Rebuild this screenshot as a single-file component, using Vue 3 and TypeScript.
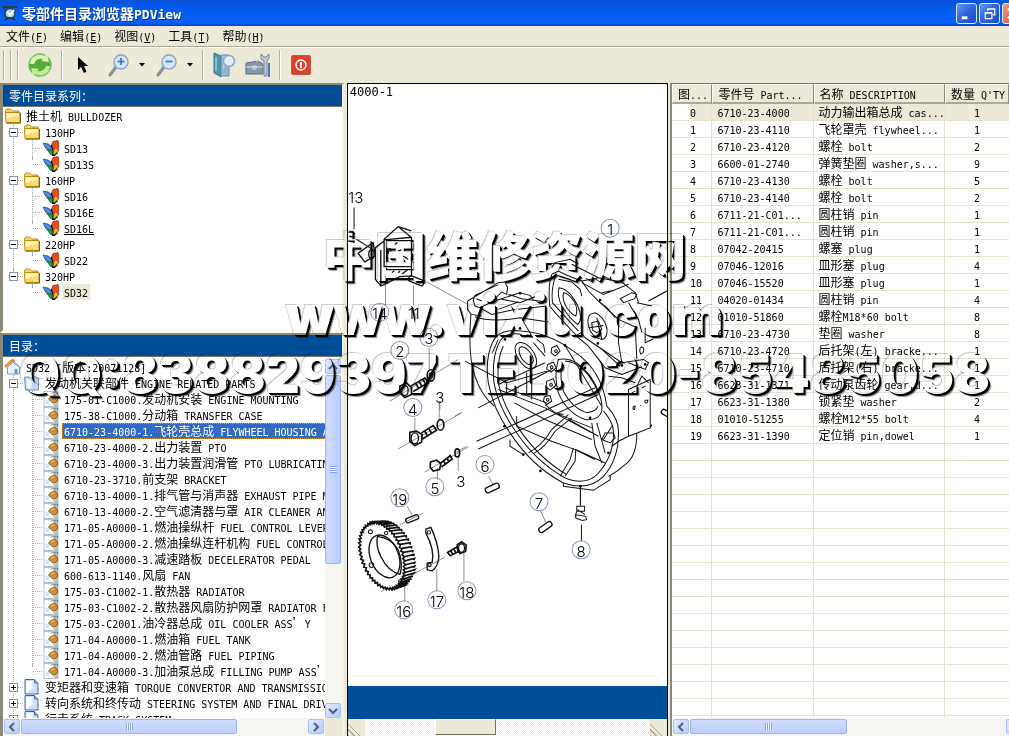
<script setup lang="ts">
import { h } from 'vue'

// Splits a label into CJK and Latin runs so each gets its own grid size.
const Mixed = (props: { t: string }) =>
  (props.t.match(/[\x00-\x7f]+|[^\x00-\x7f]+/g) ?? []).map((run) =>
    h('span', { class: run.charCodeAt(0) < 128 ? 'run-la' : 'run-cjk' }, run),
  )
Mixed.props = ['t']

const menus = [
  { name: '文件', key: 'F' },
  { name: '编辑', key: 'E' },
  { name: '视图', key: 'V' },
  { name: '工具', key: 'T' },
  { name: '帮助', key: 'H' },
]

interface Node {
  level: number
  text: string
  icon: string
  toggle?: string
  last?: boolean
  end?: boolean
  state?: string
}

const series: Node[] = [
  { level: 0, text: '推土机 BULLDOZER', icon: 'folder' },
  { level: 1, text: '130HP', icon: 'folder', toggle: '-' },
  { level: 2, text: 'SD13', icon: 'wing' },
  { level: 2, text: 'SD13S', icon: 'wing', last: true },
  { level: 1, text: '160HP', icon: 'folder', toggle: '-' },
  { level: 2, text: 'SD16', icon: 'wing' },
  { level: 2, text: 'SD16E', icon: 'wing' },
  { level: 2, text: 'SD16L', icon: 'wing', last: true, state: 'hot' },
  { level: 1, text: '220HP', icon: 'folder', toggle: '-' },
  { level: 2, text: 'SD22', icon: 'wing', last: true },
  { level: 1, text: '320HP', icon: 'folder', toggle: '-', last: true },
  { level: 2, text: 'SD32', icon: 'wing', last: true, end: true, state: 'dim' },
]

const parts = [
  '175-01-C1000.发动机安装 ENGINE MOUNTING',
  '175-38-C1000.分动箱 TRANSFER CASE',
  '6710-23-4000-1.飞轮壳总成 FLYWHEEL HOUSING ASSEMBLY',
  '6710-23-4000-2.出力装置 PTO',
  '6710-23-4000-3.出力装置润滑管 PTO LUBRICATING',
  '6710-23-3710.前支架 BRACKET',
  '6710-13-4000-1.排气管与消声器 EXHAUST PIPE MUFFLER',
  '6710-13-4000-2.空气滤清器与罩 AIR CLEANER AND',
  '171-05-A0000-1.燃油操纵杆 FUEL CONTROL LEVER',
  '171-05-A0000-2.燃油操纵连杆机构 FUEL CONTROL',
  '171-05-A0000-3.减速踏板 DECELERATOR PEDAL',
  '600-613-1140.风扇 FAN',
  '175-03-C1002-1.散热器 RADIATOR',
  '175-03-C1002-2.散热器风扇防护网罩 RADIATOR FAN',
  '175-03-C2001.油冷器总成 OIL COOLER ASS’Y',
  '171-04-A0000-1.燃油箱 FUEL TANK',
  '171-04-A0000-2.燃油管路 FUEL PIPING',
  '171-04-A0000-3.加油泵总成 FILLING PUMP ASS’Y',
]

const catalog: Node[] = [
  { level: 0, text: 'SD32 [版本:20071128]', icon: 'house' },
  { level: 1, text: '发动机关联部件 ENGINE RELATED PARTS', icon: 'book', toggle: '-' },
  ...parts.map((text, i) => ({
    level: 2,
    text,
    icon: 'part',
    last: i === parts.length - 1,
    state: i === 2 ? 'picked' : undefined,
  })),
  { level: 1, text: '变矩器和变速箱 TORQUE CONVERTOR AND TRANSMISSION', icon: 'page', toggle: '+' },
  { level: 1, text: '转向系统和终传动 STEERING SYSTEM AND FINAL DRIVE', icon: 'page', toggle: '+' },
  { level: 1, text: '行走系统 TRACK SYSTEM', icon: 'page', toggle: '+' },
]

const rows: string[][] = [
  ['0', '6710-23-4000', '动力输出箱总成 cas...', '1'],
  ['1', '6710-23-4110', '飞轮罩壳 flywheel...', '1'],
  ['2', '6710-23-4120', '螺栓 bolt', '2'],
  ['3', '6600-01-2740', '弹簧垫圈 washer,s...', '9'],
  ['4', '6710-23-4130', '螺栓 bolt', '5'],
  ['5', '6710-23-4140', '螺栓 bolt', '2'],
  ['6', '6711-21-C01...', '圆柱销 pin', '1'],
  ['7', '6711-21-C01...', '圆柱销 pin', '1'],
  ['8', '07042-20415', '螺塞 plug', '1'],
  ['9', '07046-12016', '皿形塞 plug', '4'],
  ['10', '07046-15520', '皿形塞 plug', '1'],
  ['11', '04020-01434', '圆柱销 pin', '4'],
  ['12', '01010-51860', '螺栓M18*60 bolt', '8'],
  ['13', '6710-23-4730', '垫圈 washer', '8'],
  ['14', '6710-23-4720', '后托架(左) bracke...', '1'],
  ['15', '6710-23-4710', '后托架(右) bracke...', '1'],
  ['16', '6623-31-1371', '传动泵齿轮 gear,d...', '1'],
  ['17', '6623-31-1380', '锁紧垫 washer', '2'],
  ['18', '01010-51255', '螺栓M12*55 bolt', '4'],
  ['19', '6623-31-1390', '定位销 pin,dowel', '1'],
]
const blankRows = 18

const callouts = [
  { n: '1', x: 610, y: 229 },
  { n: '14', x: 380, y: 313 },
  { n: '3', x: 429, y: 338 },
  { n: '2', x: 400, y: 351 },
  { n: '4', x: 413, y: 408 },
  { n: '6', x: 485, y: 465 },
  { n: '5', x: 435, y: 487 },
  { n: '7', x: 539, y: 502 },
  { n: '19', x: 400, y: 498 },
  { n: '8', x: 581, y: 550 },
  { n: '16', x: 404, y: 610 },
  { n: '17', x: 437, y: 600 },
  { n: '18', x: 467, y: 591 },
]
const plain = [
  { n: '13', x: 356, y: 198 },
  { n: '11', x: 414, y: 314 },
  { n: '3', x: 440, y: 397 },
  { n: '3', x: 461, y: 481 },
]

// Ring gear: teeth run from the front rim ellipse to the rear one.
const tilt = (-20 * Math.PI) / 180
function rim(a: number, cx: number, cy: number, rx: number, ry: number): [number, number] {
  const x = rx * Math.cos(a)
  const y = ry * Math.sin(a)
  return [cx + x * Math.cos(tilt) - y * Math.sin(tilt), cy + x * Math.sin(tilt) + y * Math.cos(tilt)]
}
let gearFace = ''
let gearTeeth = ''
const toothCount = 52
for (let i = 0; i < toothCount * 2; i++) {
  const a = (i * Math.PI) / toothCount
  const k = i % 2 ? 0 : 6
  const p = rim(a, 112, 468, 58 + k, 100 + k)
  gearFace += (i ? 'L' : 'M') + p.map(Math.round).join(' ')
  const deg = (a * 180) / Math.PI
  if (i % 2 === 0 && (deg < 100 || deg > 262)) {
    const q = rim(a, 142, 462, 62, 102)
    const r = rim(a + 0.05, 142, 462, 60, 100)
    gearTeeth += `M${p.map(Math.round).join(' ')}L${q.map(Math.round).join(' ')}L${r.map(Math.round).join(' ')}`
  }
}
gearFace += 'Z'
</script>

<template>
  <div class="app">
    <svg class="defs" aria-hidden="true">
      <symbol id="folder" viewBox="0 0 17 16">
        <path d="M1 4.500V2.500L2.500 1H6L8 3H14.500V5" fill="#f3d265" stroke="#b78f1d" />
        <path d="M.8 4.500H15.500V14.500H1.500Z" fill="#f7dc72" stroke="#b88c17" />
        <path d="M2 5.500H14.500V8Q8 8 2 11Z" fill="#fff4b8" />
        <path d="M2 15.200H16V5" fill="none" stroke="#806015" />
      </symbol>
      <symbol id="wing" viewBox="0 0 17 16">
        <path d="M9 5L10.500 1.500 15.500 .5 16.500 4 16 11 12 12.500Z" fill="#e0501f" stroke="#8a2410" stroke-width=".7" />
        <path d="M.5 3L6 4 9 7 10 11 7 11 3 8Z" fill="#4a8bdc" stroke="#173e86" stroke-width=".7" />
        <path d="M4 9L8.500 10 11 15 8 14.500Z" fill="#219a4f" stroke="#0d5b2b" stroke-width=".6" />
        <path d="M10.500 10L15 8.500 14.500 13 11.500 14.500Z" fill="#f7b31a" />
        <path d="M8.500 5L10.500 10.500 10.500 15M15 12.500L12 15.300H9.500" stroke="#111" stroke-width="1.200" fill="none" />
      </symbol>
      <symbol id="page" viewBox="0 0 17 16">
        <path d="M1.500 .5H11L14.500 4V15H1.500Z" fill="#cfe2fc" stroke="#4569a5" />
        <path d="M3 2H9V9L3 14Z" fill="#fff" />
        <path d="M11 .5V4H14.500" fill="#9fbce6" stroke="#4569a5" />
      </symbol>
      <symbol id="book" viewBox="0 0 17 16">
        <path d="M1 2H6L9 4 11 1.500 15 3V15H2Z" fill="#c3d7f6" stroke="#6f91c4" />
        <path d="M3 3.500L8 6 8 14 3 13Z" fill="#f2f7ff" />
      </symbol>
      <symbol id="part" viewBox="0 0 17 16">
        <path d="M1 0H16V16H1Z" fill="#b6bfce" />
        <path d="M2 1H11V15H2Z" fill="#fff" />
        <path d="M3 9H7V13H3Z" fill="#cfe6fb" />
        <path d="M9 2L15 1V4" stroke="#7a8496" fill="none" />
        <path d="M6 8L9 5H11L12 3.500 13 5 15 6V10L12 12 9 11Z" fill="#c9932a" stroke="#765013" stroke-width=".8" />
        <path d="M9 7L12 6" stroke="#ffe49a" />
      </symbol>
      <symbol id="house" viewBox="0 0 17 16">
        <path d="M3 8L9 3 15 8V15H3Z" fill="#e9f1fb" stroke="#7b9cc9" />
        <path d="M.5 8L8 1 10 3" fill="none" stroke="#f08a22" stroke-width="2.500" />
        <path d="M9 3L16 9" stroke="#8aa9d2" stroke-width="1.500" />
        <path d="M10 10H13V15H10Z" fill="#6f95c9" />
      </symbol>
    </svg>

    <header class="titlebar">
      <svg class="app-icon" viewBox="0 0 16 16" aria-hidden="true">
        <path d="M0 1H15V3H4L2 5Z" fill="#273d47" />
        <circle cx="8" cy="8.500" r="5" fill="#a7d8de" stroke="#26444d" stroke-width="1.500" />
        <path d="M5 6.500L8 10 12 5" stroke="#f4fdff" stroke-width="1.800" fill="none" />
        <path d="M3 15L6 13H10L13 15" stroke="#1b2f38" stroke-width="1.500" fill="none" />
      </svg>
      <h1><Mixed t="零部件目录浏览器PDView" /></h1>
      <div class="win-buttons">
        <button type="button" aria-label="Minimize">
          <svg viewBox="0 0 20 20"><path d="M5 13H11V16H5Z" fill="#fff" /></svg>
        </button>
        <button type="button" aria-label="Restore">
          <svg viewBox="0 0 20 20" fill="none" stroke="#fff">
            <path d="M5.500 9.500H12.500V15.500H5.500ZM5 9H13" stroke-width="1.300" />
            <path d="M8 7V5.500H15.500V11.500H13.500M8 5H16" stroke-width="1.300" />
          </svg>
        </button>
        <button type="button" class="close" aria-label="Close">
          <svg viewBox="0 0 20 20"><path d="M5 5L15 15M15 5L5 15" stroke="#fff" stroke-width="2" /></svg>
        </button>
      </div>
    </header>

    <nav class="menubar">
      <button v-for="m in menus" :key="m.key" type="button">
        <Mixed :t="m.name" /><span class="key">(<u>{{ m.key }}</u>)</span>
      </button>
    </nav>

    <div class="toolbar">
      <i class="grip"></i><i class="grip"></i><i class="grip"></i>
      <button type="button" class="tool wide" aria-label="Refresh">
        <svg viewBox="0 0 26 26" width="26" height="26">
          <circle cx="13" cy="13" r="11.500" fill="#52ad3a" stroke="#a9cf9b" />
          <path d="M3 12A10 9 0 0 1 18 4L20 2 22 10 14 9 16 7Q9 6 7 12Z" fill="#d8f3ae" />
          <path d="M23 14A10 9 0 0 1 8 22L6 24 4 16 12 17 10 19Q17 20 19 14Z" fill="#c2ec98" />
        </svg>
      </button>
      <i class="sep"></i>
      <button type="button" class="tool wide" aria-label="Select">
        <svg viewBox="0 0 12 18" width="12" height="18">
          <path d="M1 1V14L4 11 7 17 9.500 15.500 7 10H11Z" fill="#000" />
        </svg>
      </button>
      <button v-for="z in ['+', '-']" :key="z" type="button" class="tool zoomer" :aria-label="z === '+' ? 'Zoom in' : 'Zoom out'">
        <svg viewBox="0 0 22 24" width="22" height="24">
          <path d="M8 14L2 22" stroke="#8c8f98" stroke-width="3" stroke-linecap="round" />
          <circle cx="13" cy="9" r="7" fill="#d9e9fb" stroke="#8fa5c4" stroke-width="1.500" />
          <path d="M9.500 8.500H16.500" stroke="#3f77c7" stroke-width="1.800" />
          <path v-if="z === '+'" d="M13 5V12" stroke="#3f77c7" stroke-width="1.800" />
        </svg>
        <svg class="drop" viewBox="0 0 6 4" width="6" height="4"><path d="M0 0H6L3 3.500Z" /></svg>
      </button>
      <i class="sep far"></i>
      <button type="button" class="tool" aria-label="Find part">
        <svg viewBox="0 0 26 26" width="26" height="26">
          <path d="M3 1L10 4V25L3 21Z" fill="#4c93ae" stroke="#3b7590" />
          <path d="M10 3H18V24H10Z" fill="#8bbccc" stroke="#5b91a8" />
          <path d="M5 5V19M13 4V23" stroke="#c5e4ee" />
          <path d="M15 15L12 22" stroke="#a3aebd" stroke-width="3" />
          <circle cx="18" cy="9" r="5.500" fill="#e3effb" stroke="#8ca6c8" stroke-width="1.500" />
        </svg>
      </button>
      <button type="button" class="tool" aria-label="Toolbox">
        <svg viewBox="0 0 26 26" width="26" height="26">
          <path d="M1 11L13 9 18 12V22H1Z" fill="#8799a8" stroke="#596b7a" />
          <path d="M1 15H18M7 10V8H12V10M8 14H11V17H8Z" fill="none" stroke="#dbe5ec" />
          <path d="M16 2V7L19 9V24H22V9L24 6V2L21 5H19Z" fill="#bccad8" stroke="#76889a" />
          <path d="M24 11V25" stroke="#4e78a9" stroke-width="2" />
        </svg>
      </button>
      <i class="sep far"></i>
      <button type="button" class="tool" aria-label="Exit">
        <svg viewBox="0 0 20 20" width="20" height="20">
          <rect x=".5" y=".5" width="19" height="19" rx="1.500" fill="#d9412f" stroke="#c4594b" />
          <circle cx="10" cy="10" r="5" fill="none" stroke="#fff" stroke-width="1.500" />
          <path d="M10 7V13" stroke="#fff" stroke-width="1.800" />
        </svg>
      </button>
    </div>

    <main class="work">
      <div class="side">
        <section class="panel">
          <h2><Mixed t="零件目录系列：" /></h2>
          <ul class="tree">
            <li v-for="n in series" :key="n.text" :class="'l' + n.level">
              <i v-if="n.level === 2" class="guide" :class="{ through: !n.end }"></i>
              <i v-if="n.level > 0" class="guide branch" :class="n.last ? 'half' : 'through'">
                <button v-if="n.toggle" type="button" class="toggle" aria-label="Collapse"></button>
              </i>
              <svg class="icon" viewBox="0 0 17 16"><use :href="'#' + n.icon" /></svg>
              <span class="label" :class="n.state"><Mixed :t="n.text" /></span>
            </li>
          </ul>
        </section>
        <section class="panel lower">
          <h2><Mixed t="目录：" /></h2>
          <div class="scrollbox">
            <ul class="tree">
              <li v-for="n in catalog" :key="n.text" :class="'l' + n.level">
                <i v-if="n.level === 2" class="guide through"></i>
                <i v-if="n.level > 0" class="guide branch" :class="n.last ? 'half' : 'through'">
                  <button v-if="n.toggle" type="button" class="toggle" :class="{ plus: n.toggle === '+' }" aria-label="Toggle"></button>
                </i>
                <svg class="icon" viewBox="0 0 17 16"><use :href="'#' + n.icon" /></svg>
                <span class="label" :class="n.state"><Mixed :t="n.text" /></span>
              </li>
            </ul>
            <div class="vbar">
              <button type="button" class="sbtn" aria-label="Up"><svg viewBox="0 0 10 10"><path d="M1 7L5 3 9 7" /></svg></button>
              <div class="thumb"><i class="ridges"></i></div>
              <div class="rest"></div>
              <button type="button" class="sbtn" aria-label="Down"><svg viewBox="0 0 10 10"><path d="M1 3L5 7 9 3" /></svg></button>
            </div>
            <div class="hbar">
              <button type="button" class="sbtn" aria-label="Left"><svg viewBox="0 0 10 10"><path d="M7 1L3 5 7 9" /></svg></button>
              <div class="thumb"><i class="ridges"></i></div>
              <div class="rest"></div>
              <button type="button" class="sbtn" aria-label="Right"><svg viewBox="0 0 10 10"><path d="M3 1L7 5 3 9" /></svg></button>
            </div>
            <div class="corner"></div>
          </div>
        </section>
      </div>

      <section class="viewer">
        <svg class="drawing" viewBox="348 85 319 601" preserveAspectRatio="xMidYMin slice">
          <text x="350" y="97" class="fig">4000-1</text>

          <g transform="translate(345 180) scale(.3333)" class="ink">
            <path d="M28 85V150M35 180L90 215M12 160Q25 150 30 165M10 185L30 190M15 170L28 175" />
            <path class="bold" d="M12 158L28 160M14 172L30 172M12 186L30 186" />
            <path class="bold" d="M92 205V300L108 320 125 312 165 292 200 290V175L160 142 118 180V262H200M118 182L200 174M92 205L118 185M108 212V318M160 142L200 155" />
            <path class="bold" d="M40 222L85 190 92 230 60 248Z" />
            <ellipse cx="80" cy="225" rx="8" ry="13" class="bold" />
            <path d="M130 210L138 208M150 195L158 190M160 215L170 212M175 230L190 240M130 225V215H140M142 280L148 274M160 280L166 276M172 284L190 270" class="bold" />
            <rect x="190" y="296" width="48" height="17" rx="8" class="bold" transform="rotate(22 214 305)" />
            <path d="M240 305L370 376M122 290V378M206 318V378M120 310V320" class="thin" />
            <path d="M180 550V610M253 505V570M135 665L340 540M285 665V690" class="thin" />
            <path class="heavy" d="M165 620L185 610 200 625 200 645 180 654 165 640ZM198 620L240 595 250 610 205 636M212 610L222 628M222 604L232 622M234 598L242 614" />
            <ellipse cx="180" cy="633" rx="10" ry="15" class="bold" />
            <ellipse cx="258" cy="588" rx="11" ry="17" class="heavy" />
            <ellipse cx="258" cy="588" rx="5" ry="8" />
            <path d="M910 365L965 336" class="thin" />
          </g>

          <g transform="translate(455 260) scale(.3333)" class="ink">
            <path d="M38 125L130 70 150 68 158 85 155 105 140 98 110 128 75 145 60 140 55 122 60 108 130 76M38 125V150L48 165 80 170M65 118L80 125M75 145L110 165 180 150M110 128L195 100 225 108 235 120M140 120L195 130 240 112M130 150L190 128M190 150L275 140M160 105L200 118 275 128M48 165Q38 290 60 350Q80 410 118 440M60 172Q110 190 195 175L280 188" />
            <path d="M290 45L310 35 335 48 380 65 400 95 430 125 455 145 480 175M290 45Q278 80 284 140L300 160 370 235M300 55Q288 90 292 130L370 215M310 60L350 68 375 90 380 110M312 85Q305 110 320 140Q345 180 368 195Q385 180 368 140Q345 90 312 85ZM325 100Q320 120 335 145Q350 165 362 170Q370 150 358 128Q340 100 325 100Z" />
            <path d="M290 25L300 10 345 0 370 15M350 15L430 55 500 68 540 100 550 130M380 65L430 55M380 70L445 105 520 75M440 100L480 92M495 118L530 100 545 105 538 118 505 130ZM430 125L490 180 545 205M520 130L550 180 560 220M545 130L590 140M580 125L640 92" />
            <path d="M405 165Q395 175 400 200Q410 235 440 240Q460 235 455 205Q445 170 420 160ZM410 190L430 185 440 210 425 220 412 212ZM425 175L440 240M403 205L445 198" />
            <path d="M360 230L378 220 390 235 500 310 565 300 580 310 570 330 520 310M370 235L400 260 450 325 500 345M390 235L440 270 495 320M490 170V250L500 310M540 200L545 300M570 205V250L595 238M558 262Q550 270 557 284Q568 280 565 266ZM500 345L560 322M545 380L560 350 580 370M460 350L500 355 540 370" />
            <path d="M520 390L585 360V505L520 530ZM520 530L490 545 470 560M585 505L590 495M545 520Q545 590 510 615Q480 640 460 650M530 400L540 395M535 440Q530 450 538 450L540 440ZM555 438H557M570 422Q566 432 576 430L578 422ZM560 385L572 380" />
            <path d="M200 215Q130 205 112 250Q90 300 100 370Q115 450 165 520Q230 620 325 670Q400 695 445 650Q490 600 490 520Q492 480 455 440Q440 330 355 275Q280 220 200 215Z" />
            <path d="M200 225Q145 215 130 255Q110 300 117 370Q130 440 178 510Q240 605 330 655Q395 680 430 640Q475 590 475 520Q476 490 445 455" />
            <path d="M145 260Q125 300 130 370Q145 440 190 505Q250 595 335 645M130 240L112 280M330 258L440 440" />
            <path d="M180 265Q185 240 215 255Q245 280 245 310Q240 335 215 325Q180 300 180 265ZM192 270Q195 255 215 268Q235 285 235 305Q230 320 215 312Q192 295 192 270ZM235 250L270 290M245 240L265 255 270 280M225 225L232 235M210 232L220 225" />
            <path d="M310 300Q295 350 310 400Q335 460 390 480Q430 485 440 455Q445 410 405 350Q360 290 310 300ZM322 310Q312 350 325 395Q350 445 395 460Q425 455 428 440M330 305Q390 310 430 400" />
            <path d="M290 265L305 258 315 275 300 290 288 280ZM278 315L295 308 303 325 288 338 275 328ZM275 365L295 358 302 378 285 392 273 382ZM268 412L285 408 290 425 275 435 265 425Z" />
            <circle cx="303" cy="275" r="4" /><circle cx="290" cy="323" r="4" /><circle cx="288" cy="376" r="4" /><circle cx="278" cy="421" r="4" />
            <path d="M30 305L155 370 275 335M70 445L290 330M65 545L420 385M70 568L430 405M130 390L270 445 410 520M150 385L275 430M130 375L270 310M155 370V405M215 340V405M230 340V420M178 430L270 480 410 540M185 470V500L290 545 360 570 420 600M220 580Q260 560 290 510L340 465M235 582Q270 565 300 515L350 475M300 460L410 505M340 480L430 530M315 650L345 600 355 565M330 650L360 605 362 570 450 610M410 490L420 560 440 610M425 490L450 580M440 540L465 550 480 535 475 520 450 520 440 540M445 540L470 500M165 540V560L205 585M325 670V680L415 692 465 660V648M270 435L300 460 325 465" />
            <path d="M0 470L20 458M35 560L0 580" class="thin" />
            <g class="spots"><circle v-for="(s, i) in [[150,240],[330,258],[195,102],[435,122],[148,500],[205,585],[256,634],[376,680],[460,580],[405,475],[150,366],[390,325],[428,252],[320,170],[195,207],[570,315],[500,318]]" :key="i" :cx="s[0]" :cy="s[1]" r="4" /></g>
            <rect x="618" y="452" width="26" height="15" rx="6" class="bold" transform="rotate(30 630 460)" />
            <path d="M376 680V735" />
          </g>

          <g transform="translate(345 400) scale(.3333)" class="ink">
            <path d="M283 5V60M210 55V95M160 148L350 40M240 217L370 142M340 170V215M278 205V240M430 230L445 255M585 330L602 368M187 320L202 346M110 575L300 472M180 530V605M276 510V575M357 455V545M165 375L235 340" class="thin" />
            <path class="heavy" d="M195 98L215 95 232 105 230 128 210 138 195 125ZM230 100L265 78 275 92 233 118M240 95L248 110M252 87L260 101" />
            <ellipse cx="210" cy="116" rx="11" ry="16" class="bold" />
            <ellipse cx="287" cy="76" rx="10" ry="16" class="heavy" />
            <path class="heavy" d="M257 187L275 182 288 192 284 210 265 214 256 203ZM288 190L316 168 322 178 290 202M296 184L302 194M306 176L312 186" />
            <ellipse cx="337" cy="160" rx="7" ry="12" class="heavy" />
            <g class="bold">
              <rect x="420" y="257" width="44" height="16" rx="7" transform="rotate(-25 442 265)" />
              <rect x="579" y="374" width="44" height="16" rx="7" transform="rotate(-35 601 382)" />
              <rect x="182" y="350" width="40" height="14" rx="6" transform="rotate(-22 202 357)" />
            </g>
            <path d="M706 260V320M709 375V425M695 320H718V335H695ZM697 330L720 345M692 345L722 350 724 360 712 362 692 355ZM695 335L690 350" />
            <path :d="gearTeeth" class="heavy" />
            <path :d="gearFace" class="heavy" fill="#fff" />
            <ellipse cx="119" cy="470" rx="42" ry="67" transform="rotate(-22 119 470)" class="bold" />
            <path class="bold" d="M98 410Q92 440 108 470Q130 515 166 524M98 410Q140 415 160 450Q175 490 166 524" />
            <circle cx="77" cy="396" r="6" /><circle cx="124" cy="400" r="5" /><circle cx="80" cy="496" r="7" /><circle cx="166" cy="545" r="5" />
            <path class="bold" d="M243 388L258 383Q280 430 282 470Q280 500 262 513L247 510 247 490 262 488Q270 450 243 400Z" />
            <circle cx="252" cy="398" r="5" /><circle cx="254" cy="496" r="5" />
            <path class="heavy" d="M308 458L335 442 342 455 316 468ZM318 454L324 464M327 448L333 459M337 435L350 426 364 436 362 455 345 461 338 450Z" />
            <ellipse cx="350" cy="445" rx="9" ry="13" class="bold" />
          </g>

          <g class="tags">
            <g v-for="c in callouts" :key="c.n + c.x">
              <circle :cx="c.x" :cy="c.y" r="9" />
              <text :x="c.x" :y="c.y + 7">{{ c.n }}</text>
            </g>
            <text v-for="p in plain" :key="p.n + p.x" :x="p.x" :y="p.y + 6">{{ p.n }}</text>
          </g>
        </svg>
        <div class="bluebar"></div>
        <div class="mid-scroll"><i></i><b></b><i></i></div>
      </section>

      <section class="list">
        <div class="table-wrap">
          <table>
            <colgroup><col class="c1" /><col class="c2" /><col class="c3" /><col class="c4" /></colgroup>
            <thead>
              <tr>
                <th v-for="t in ['图...', '零件号 Part...', '名称 DESCRIPTION', '数量 Q\'TY']" :key="t" scope="col"><Mixed :t="t" /></th>
              </tr>
            </thead>
            <tbody>
              <tr v-for="(r, i) in rows" :key="i" :class="{ current: i === 0 }">
                <td v-for="(c, j) in r" :key="j"><Mixed :t="c" /></td>
              </tr>
              <tr v-for="i in blankRows" :key="'b' + i"><td></td><td></td><td></td><td></td></tr>
            </tbody>
          </table>
        </div>
        <div class="hbar">
          <button type="button" class="sbtn" aria-label="Left"><svg viewBox="0 0 10 10"><path d="M7 1L3 5 7 9" /></svg></button>
          <div class="thumb"><i class="ridges"></i></div>
          <div class="rest"></div>
          <button type="button" class="sbtn" aria-label="Right"><svg viewBox="0 0 10 10"><path d="M3 1L7 5 3 9" /></svg></button>
        </div>
      </section>
    </main>

    <div class="watermark">
      <p class="cn">中国维修资源网</p>
      <p class="url">www.vixiu.com</p>
      <p class="tel">QQ:838829397 TEL:020-85485058</p>
    </div>
  </div>
</template>

<style>
body {
  margin: 0;
}
.run-la {
  font-family: 'DejaVu Sans Mono', 'Liberation Mono', monospace;
  font-size: 10px;
  line-height: 10px;
  white-space: pre;
}
.run-cjk {
  font-family: 'Noto Sans CJK SC', sans-serif;
}
h1 .run-la {
  font-size: 13px;
}
</style>

<style scoped>
.app {
  position: relative;
  display: flex;
  flex-direction: column;
  height: 100vh;
  overflow: hidden;
  background: #ece9d8;
  color: #000;
  font: 12px/16px 'Noto Sans CJK SC', sans-serif;
}
.defs {
  position: absolute;
  width: 0;
  height: 0;
}
button {
  margin: 0;
  padding: 0;
  border: 0;
  background: none;
  color: inherit;
  font: inherit;
}
h1,
h2,
p,
ul {
  margin: 0;
  padding: 0;
}
.titlebar {
  display: flex;
  align-items: center;
  flex: none;
  height: 26px;
  padding-left: 2px;
  background: linear-gradient(#0a52d8, #0458e8 20%, #055ef3 60%, #0561fc 85%, #0345c4);
}
.app-icon {
  width: 16px;
  height: 16px;
}
h1 {
  flex: 1;
  margin-left: 4px;
  color: #fff;
  font-size: 14px;
  line-height: 20px;
  font-weight: 700;
  text-shadow: 1px 1px 0 #0b3595;
}
.win-buttons {
  display: flex;
  gap: 2px;
  margin-right: -14px;
}
.win-buttons button {
  box-sizing: border-box;
  width: 21px;
  height: 21px;
  border: 1px solid #dfe8fb;
  border-radius: 3px;
  background: linear-gradient(135deg, #6b93ee, #2f62dd 50%, #1c4bc4);
}
.win-buttons svg {
  display: block;
  width: 19px;
  height: 19px;
}
.win-buttons .close {
  background: linear-gradient(135deg, #f09a80, #d84a25);
}
.menubar {
  display: flex;
  flex: none;
  align-items: center;
  height: 20px;
  border-bottom: 1px solid #aca899;
}
.menubar button {
  padding: 0 6px;
  white-space: nowrap;
}
.key {
  font-family: 'DejaVu Sans Mono', monospace;
  font-size: 10px;
  line-height: 10px;
}
.toolbar {
  display: flex;
  flex: none;
  align-items: center;
  height: 34px;
  padding-bottom: 1px;
  border-top: 1px solid #fff;
}
.grip,
.sep {
  flex: none;
  width: 1px;
  height: 30px;
  background: #b5b09e;
  box-shadow: 1px 0 #fff;
}
.grip {
  margin: 0 3px;
}
.sep {
  margin: 0 2px;
}
.far {
  margin: 0 4px;
}
.tool {
  display: flex;
  align-items: center;
  justify-content: center;
  width: 34px;
  height: 30px;
}
.wide {
  width: 38px;
}
.zoomer {
  width: 48px;
  gap: 9px;
}
.work {
  display: grid;
  flex: 1;
  grid-template-columns: minmax(0, 346fr) minmax(0, 324fr) minmax(0, 339fr);
  min-height: 0;
}
.side {
  display: grid;
  grid-template-rows: minmax(0, 250fr) minmax(0, 402fr);
  min-height: 0;
}
.panel {
  display: flex;
  flex-direction: column;
  min-height: 0;
  margin-right: 2px;
  border: 2px solid #8c897b;
  border-right-color: #f4f2e8;
  border-bottom: 3px solid #f8f7f0;
  border-left: 3px solid #8c897b;
  background: #fff;
}
.lower {
  border-bottom: 0;
}
h2 {
  flex: none;
  height: 21px;
  padding-left: 6px;
  border-bottom: 1px solid #77776c;
  background: #004e98;
  color: #fff;
  font-size: 12px;
  line-height: 21px;
  font-weight: 400;
}
.tree {
  overflow: hidden;
  min-width: 0;
  min-height: 0;
  padding: 1px 0 0 1px;
  list-style: none;
}
.tree li {
  display: flex;
  height: 16px;
  white-space: nowrap;
}
.guide {
  position: relative;
  flex: none;
  width: 19px;
  height: 16px;
}
.through {
  background: linear-gradient(#aaa 50%, transparent 50%) 9px 0 / 1px 2px repeat-y;
}
.half {
  background: linear-gradient(#aaa 50%, transparent 50%) 9px 0 / 1px 8px no-repeat;
}
.branch::after {
  position: absolute;
  top: 8px;
  right: 0;
  left: 10px;
  border-top: 1px dotted #aaa;
  content: '';
}
.toggle {
  position: absolute;
  z-index: 1;
  top: 4px;
  left: 5px;
  width: 9px;
  height: 9px;
  border: 1px solid #8797a8;
  background: linear-gradient(#000, #000) center / 5px 1px no-repeat #fff;
}
.plus {
  background:
    linear-gradient(#000, #000) center / 5px 1px no-repeat,
    linear-gradient(#000, #000) center / 1px 5px no-repeat #fff;
}
.icon {
  flex: none;
  width: 18px;
  height: 16px;
}
.label {
  margin-left: 2px;
  padding: 0 2px;
  height: 16px;
  line-height: 16px;
}
.hot {
  text-decoration: underline;
}
.dim {
  background: #ece9d8;
}
.picked {
  box-sizing: border-box;
  background: #316ac5;
  color: #fff;
  outline: 1px dotted #d99c3a;
  outline-offset: -1px;
}
.scrollbox {
  display: grid;
  flex: 1;
  grid-template-rows: minmax(0, 1fr) 18px;
  grid-template-columns: minmax(0, 1fr) 17px;
  min-height: 0;
  padding-top: 1px;
}
.vbar,
.hbar {
  display: flex;
  gap: 1px;
  background: #f6f5f1;
}
.vbar {
  flex-direction: column;
  padding: 1px 1px 0 0;
}
.hbar {
  box-sizing: border-box;
  height: 18px;
  padding: 1px 1px 2px;
}
.sbtn {
  box-sizing: border-box;
  display: flex;
  align-items: center;
  justify-content: center;
  flex: none;
  width: 16px;
  height: 15px;
  border: 1px solid #a9c0f2;
  border-radius: 2px;
  background: linear-gradient(135deg, #e1eaff, #b6cafa);
}
.sbtn svg {
  width: 10px;
  height: 10px;
  fill: none;
  stroke: #4d6185;
  stroke-width: 2;
}
.thumb {
  box-sizing: border-box;
  display: flex;
  align-items: center;
  justify-content: center;
  border: 1px solid #9db5ec;
  border-radius: 2px;
  background: linear-gradient(#cfdcff, #bccffb);
}
.vbar .thumb {
  flex: 187;
  background: linear-gradient(90deg, #cfdcff, #b8ccfa);
}
.vbar .rest {
  flex: 137;
}
.hbar .thumb {
  flex: 216;
}
.hbar .rest {
  flex: 69;
}
.ridges {
  width: 7px;
  height: 7px;
  background: repeating-linear-gradient(90deg, #8ca7e6 0 1px, #eef4ff 1px 2px);
}
.vbar .ridges {
  background: repeating-linear-gradient(#8ca7e6 0 1px, #eef4ff 1px 2px);
}
.corner {
  background: #ece9d8;
}
.viewer {
  display: flex;
  flex-direction: column;
  min-height: 0;
  margin: 0 2px 0 1px;
  border: 1px solid #000;
  border-bottom: 0;
  background: #fff;
}
.drawing {
  flex: 1;
  width: 100%;
  min-height: 0;
}
.bluebar {
  flex: none;
  height: 33px;
  background: #004e98;
}
.mid-scroll {
  display: flex;
  flex: none;
  height: 17px;
  background: repeating-conic-gradient(#fff 0 25%, #f0eee2 0 50%) 0 0 / 2px 2px;
}
.mid-scroll i {
  width: 17px;
  background: linear-gradient(45deg, #aca899 0 1px, #ece9d8 1px 4px, #aca899 4px 5px, #ece9d8 5px 8px, #aca899 8px 9px, #ece9d8 9px);
}
.mid-scroll b {
  box-sizing: border-box;
  width: 61px;
  height: 16px;
  margin: 0 auto 0 22%;
  border: 1px solid #fff;
  border-right-color: #716f64;
  border-bottom-color: #716f64;
  background: #ece9d8;
}
.fig {
  font: 12px 'DejaVu Sans Mono', monospace;
}
.ink {
  fill: none;
  stroke: #111;
  stroke-width: 3;
}
.bold {
  stroke-width: 4;
}
.heavy {
  stroke-width: 5;
}
.thin {
  stroke: #555;
  stroke-width: 2;
}
.spots {
  fill: #000;
  stroke: none;
}
.tags circle {
  fill: none;
  stroke: #8796b8;
  stroke-width: 1;
}
.tags text {
  font: 300 15px Inter, sans-serif;
  text-anchor: middle;
}
.list {
  display: flex;
  flex-direction: column;
  min-height: 0;
  border-top: 1px solid #77776c;
  border-left: 2px solid #8c897b;
  background: #fff;
}
.table-wrap {
  flex: 1;
  min-height: 0;
  overflow: hidden;
}
.list .hbar {
  flex: none;
  margin-right: -14px;
}
.list .hbar .thumb {
  flex: 157;
}
.list .hbar .rest {
  flex: 159;
}
table {
  width: 100%;
  border-spacing: 0;
  table-layout: fixed;
}
.c1 {
  width: 12%;
}
.c2 {
  width: 30%;
}
.c3 {
  width: 39%;
}
.c4 {
  width: 19%;
}
th {
  box-sizing: border-box;
  height: 20px;
  padding: 0 0 0 5px;
  border: 1px solid #fff;
  border-right-color: #8c897b;
  border-bottom: 2px solid #aca899;
  background: #ece9d8;
  font-weight: 400;
  text-align: left;
  white-space: nowrap;
  line-height: 16px;
  overflow: hidden;
}
td {
  box-sizing: border-box;
  height: 17px;
  padding: 0 0 0 5px;
  border-right: 1px solid #e6e3d2;
  border-bottom: 1px solid #e6e3d2;
  line-height: 16px;
  white-space: nowrap;
  overflow: hidden;
}
td:first-child {
  padding-left: 18px;
}
td:last-child {
  padding: 0;
  border-right: 0;
  text-align: center;
}
.current td {
  background: #ece9d8;
}
.current td:first-child {
  background: linear-gradient(90deg, #fff 18px, #ece9d8 18px);
}
.watermark {
  position: absolute;
  top: 225px;
  right: 0;
  left: 0;
  display: flex;
  flex-direction: column;
  align-items: center;
  color: #fff;
  font-family: Inter, sans-serif;
  font-weight: 900;
  white-space: nowrap;
  mix-blend-mode: multiply;
  pointer-events: none;
  text-shadow:
    -1px -1px 0 #ccc,
    1px 1px 0 #000,
    2px 2px 0 #000,
    3px 3px 1px #888;
}
.cn {
  font-family: 'Noto Sans CJK SC', sans-serif;
  font-size: 52px;
  line-height: 58px;
}
.url {
  font-size: 55px;
  line-height: 64px;
}
.tel {
  font-size: 53px;
  line-height: 54px;
}
</style>
